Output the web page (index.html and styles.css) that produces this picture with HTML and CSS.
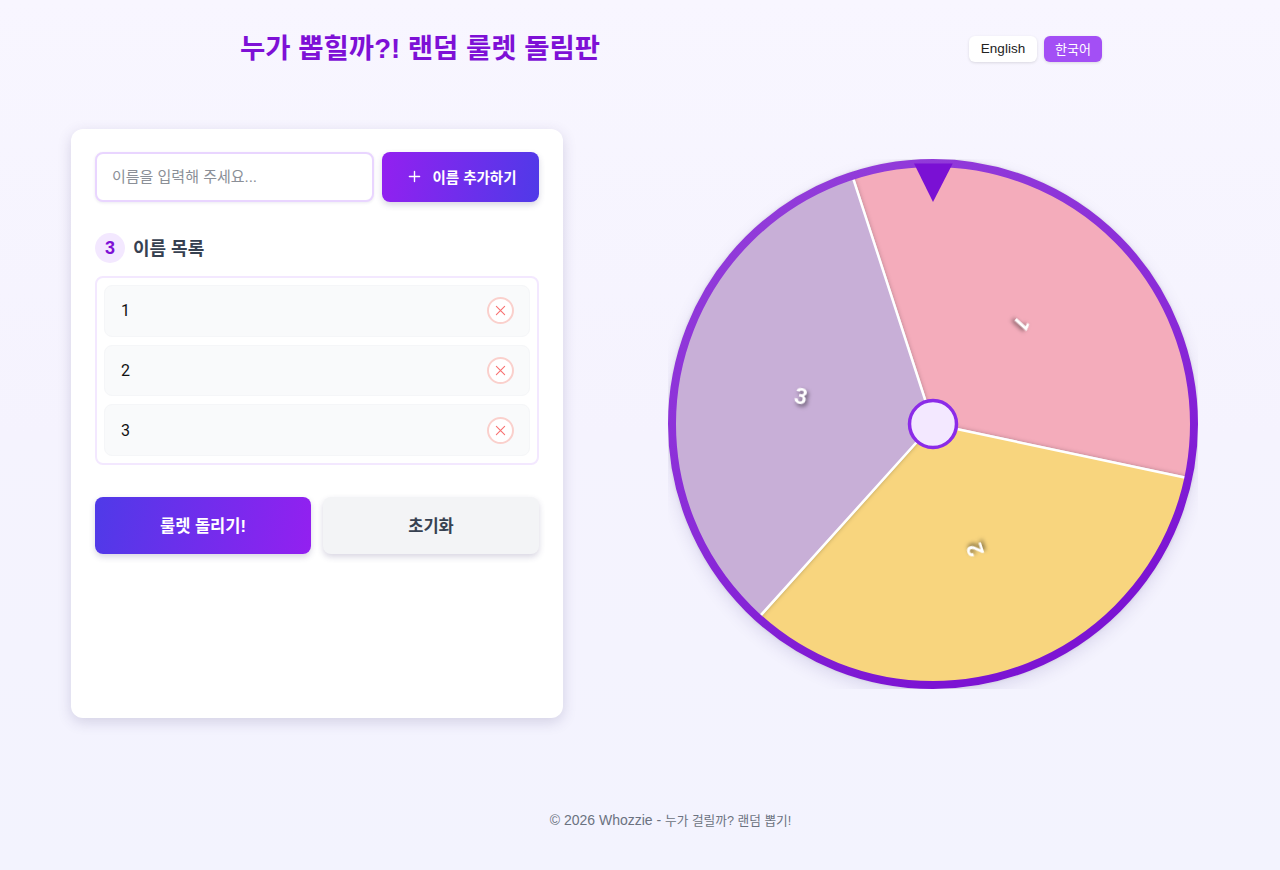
FILE: index.html
```html
<!DOCTYPE html>
<html lang="ko">
<head>
    <meta charset="UTF-8">
    <meta name="viewport" content="width=device-width, initial-scale=1.0">
    <title>누가 뽑힐까?! 랜덤 룰렛 돌림판</title>
    <link rel="stylesheet" href="styles.css">
</head>
<body>
    <header class="site-header">
        <h1 class="site-title">누가 뽑힐까?! 랜덤 룰렛 돌림판</h1>
        <div class="lang-switch">
            <button class="lang-btn">English</button>
            <button class="lang-btn lang-active">한국어</button>
        </div>
    </header>

    <main class="main-area">
        <section class="card">
            <div class="add-row">
                <input class="name-input" type="text" placeholder="이름을 입력해 주세요...">
                <button class="add-btn">
                    <svg class="add-icon" viewBox="0 0 14 14" width="13" height="13">
                        <path d="M7 1.5v11M1.5 7h11" stroke="#fff" stroke-width="1.5" stroke-linecap="round"/>
                    </svg>
                    이름 추가하기
                </button>
            </div>

            <div class="list-head">
                <span class="count-badge">3</span>
                <h2 class="list-title">이름 목록</h2>
            </div>

            <ul class="name-list">
                <li class="name-item">
                    <span>1</span>
                    <button class="remove-btn" aria-label="삭제">
                        <svg viewBox="0 0 12 12" width="11" height="11"><path d="M1.5 1.5l9 9M10.5 1.5l-9 9" stroke="#f87171" stroke-width="1.2" stroke-linecap="round"/></svg>
                    </button>
                </li>
                <li class="name-item">
                    <span>2</span>
                    <button class="remove-btn" aria-label="삭제">
                        <svg viewBox="0 0 12 12" width="11" height="11"><path d="M1.5 1.5l9 9M10.5 1.5l-9 9" stroke="#f87171" stroke-width="1.2" stroke-linecap="round"/></svg>
                    </button>
                </li>
                <li class="name-item">
                    <span>3</span>
                    <button class="remove-btn" aria-label="삭제">
                        <svg viewBox="0 0 12 12" width="11" height="11"><path d="M1.5 1.5l9 9M10.5 1.5l-9 9" stroke="#f87171" stroke-width="1.2" stroke-linecap="round"/></svg>
                    </button>
                </li>
            </ul>

            <div class="action-row">
                <button class="spin-btn">룰렛 돌리기!</button>
                <button class="reset-btn">초기화</button>
            </div>
        </section>

        <div class="wheel-box">
            <div class="wheel">
                <svg class="wheel-svg" viewBox="0 0 530 530" width="530" height="530">
                    <defs>
                        <linearGradient id="rim" x1="0" y1="0" x2="0.5" y2="1">
                            <stop offset="0" stop-color="#9440da"/>
                            <stop offset="0.6" stop-color="#8a2bd8"/>
                            <stop offset="1" stop-color="#7c14d3"/>
                        </linearGradient>
                    </defs>
                    <g class="slices">
                        <path d="M265 265L184 15.8A262 262 0 0 1 521.3 319.5Z" fill="#f4acbb"/>
                        <path d="M265 265L521.3 319.5A262 262 0 0 1 89.7 459.7Z" fill="#f8d57e"/>
                        <path d="M265 265L89.7 459.7A262 262 0 0 1 184 15.8Z" fill="#c8afd7"/>
                    </g>
                    <g class="labels">
                        <text transform="translate(354 165) rotate(132)" text-anchor="middle" dy="8">1</text>
                        <text transform="translate(307 391) rotate(252)" text-anchor="middle" dy="8">2</text>
                        <text transform="translate(133 237) rotate(12)" text-anchor="middle" dy="8">3</text>
                    </g>
                    <circle cx="265" cy="265" r="261" fill="none" stroke="url(#rim)" stroke-width="8"/>
                    <polygon points="246,4.5 284.7,4.5 265,43" fill="#7a10d4"/>
                    <circle cx="265" cy="265" r="23.5" fill="#f3e8ff" stroke="#8b2be8" stroke-width="3.5"/>
                </svg>
            </div>
        </div>
    </main>

    <footer class="site-footer">© 2026 Whozzie - <span class="footer-ko">누가 걸릴까? 랜덤 뽑기!</span></footer>
</body>
</html>
```

FILE: styles.css
```css
* {
    box-sizing: border-box;
}
html, body {
    height: 100%;
}
body {
    margin: 0;
    height: 870px;
    overflow: hidden;
    font-family: "Liberation Sans", "Noto Sans CJK KR", sans-serif;
    background: linear-gradient(180deg, #f8f6ff 0%, #f5f3fe 50%, #f3f3fe 100%);
}
button {
    font-family: inherit;
    border: none;
    cursor: pointer;
}

/* header */
.site-header {
    display: flex;
    align-items: center;
    height: 96px;
    padding-left: 240px;
}
.site-title {
    margin: 0 0 4px;
    width: 729px;
    font-size: 27.5px;
    font-weight: 700;
    color: #7e10d6;
}
.lang-switch {
    display: flex;
    gap: 7px;
    margin-top: 2px;
}
.lang-btn {
    height: 26px;
    width: 68px;
    padding: 0 0 2px;
    font-size: 13.5px;
    color: #222;
    background-color: #fff;
    border-radius: 6px;
    box-shadow: 0 1px 3px rgba(0, 0, 0, 0.12);
}
.lang-active {
    width: 58px;
    font-size: 13px;
    color: #fff;
    background-color: #a34ff5;
}

/* main */
.main-area {
    display: flex;
    align-items: center;
    gap: 105px;
    margin-top: 33px;
    padding-left: 71px;
}
.card {
    width: 492px;
    height: 589px;
    padding: 23px 24px;
    background-color: #fff;
    border-radius: 12px;
    box-shadow: 0 4px 14px rgba(60, 50, 110, 0.18);
}
.add-row {
    display: flex;
    gap: 8px;
}
.name-input {
    flex: 1;
    min-width: 0;
    height: 50px;
    padding: 0 15px 2px;
    font-family: inherit;
    font-size: 15px;
    background-color: #fff;
    border: 2px solid #e9d5ff;
    border-radius: 8px;
    box-shadow: 0 1px 3px rgba(60, 50, 110, 0.1);
    outline: none;
}
.name-input::placeholder {
    color: #8b8f97;
}
.add-btn {
    display: flex;
    align-items: center;
    justify-content: center;
    gap: 11px;
    width: 157px;
    height: 50px;
    padding: 0 0 2px 4px;
    font-size: 14.5px;
    font-weight: 700;
    color: #fff;
    background: linear-gradient(100deg, #9320f0, #4f3ae8);
    border-radius: 8px;
    box-shadow: 0 3px 6px rgba(60, 50, 110, 0.2);
}
.list-head {
    display: flex;
    align-items: center;
    gap: 8px;
    margin-top: 31px;
}
.count-badge {
    display: flex;
    align-items: center;
    justify-content: center;
    width: 30px;
    height: 30px;
    font-size: 18px;
    font-weight: 700;
    color: #7e10d6;
    background-color: #f3e8ff;
    border-radius: 50%;
}
.list-title {
    margin: -3px 0 0;
    font-size: 18px;
    font-weight: 700;
    color: #374151;
}
.name-list {
    display: flex;
    flex-direction: column;
    gap: 8px;
    height: 189px;
    margin: 13px 0 0;
    padding: 7px;
    list-style: none;
    border: 2px solid #f3e8ff;
    border-radius: 8px;
}
.name-item {
    display: flex;
    align-items: center;
    justify-content: space-between;
    height: 52px;
    padding: 0 15px 0 16px;
    font-family: Roboto, "Liberation Sans", sans-serif;
    font-size: 16px;
    color: #111;
    background-color: #f9fafb;
    border: 1px solid #f5f6f8;
    border-radius: 8px;
}
.remove-btn {
    display: flex;
    align-items: center;
    justify-content: center;
    width: 27px;
    height: 27px;
    padding: 0;
    background-color: #fff;
    border: 2px solid #fad0cc;
    border-radius: 50%;
}
.action-row {
    display: flex;
    gap: 12px;
    margin-top: 32px;
}
.spin-btn, .reset-btn {
    flex: 1;
    height: 57px;
    padding: 0 0 2px;
    font-size: 16.5px;
    font-weight: 700;
    border-radius: 8px;
    box-shadow: 0 3px 6px rgba(60, 50, 110, 0.2);
}
.spin-btn {
    color: #fff;
    background: linear-gradient(100deg, #4f3ae8, #9320f0);
}
.reset-btn {
    color: #374151;
    background-color: #f3f4f6;
}

/* wheel */
.wheel-box {
    width: 530px;
    height: 530px;
    overflow: hidden;
}
.wheel {
    width: 530px;
    height: 530px;
    border-radius: 50%;
    box-shadow: 0 6px 16px rgba(60, 50, 130, 0.13);
}
.wheel-svg {
    display: block;
}
.slices path {
    stroke: #fff;
    stroke-width: 2.5;
    filter: drop-shadow(0 0 2px rgba(0, 0, 0, 0.25));
}
.labels text {
    font-family: Roboto, "Liberation Sans", sans-serif;
    font-size: 22px;
    font-weight: 700;
    fill: #fff;
    filter: drop-shadow(2px 2px 2px rgba(0, 0, 0, 0.55));
}

/* footer */
.site-footer {
    margin-top: 92px;
    padding-left: 71px;
    width: 1270px;
    text-align: center;
    font-size: 14px;
    color: #6b7280;
}
.footer-ko {
    font-size: 12.7px;
}
```
